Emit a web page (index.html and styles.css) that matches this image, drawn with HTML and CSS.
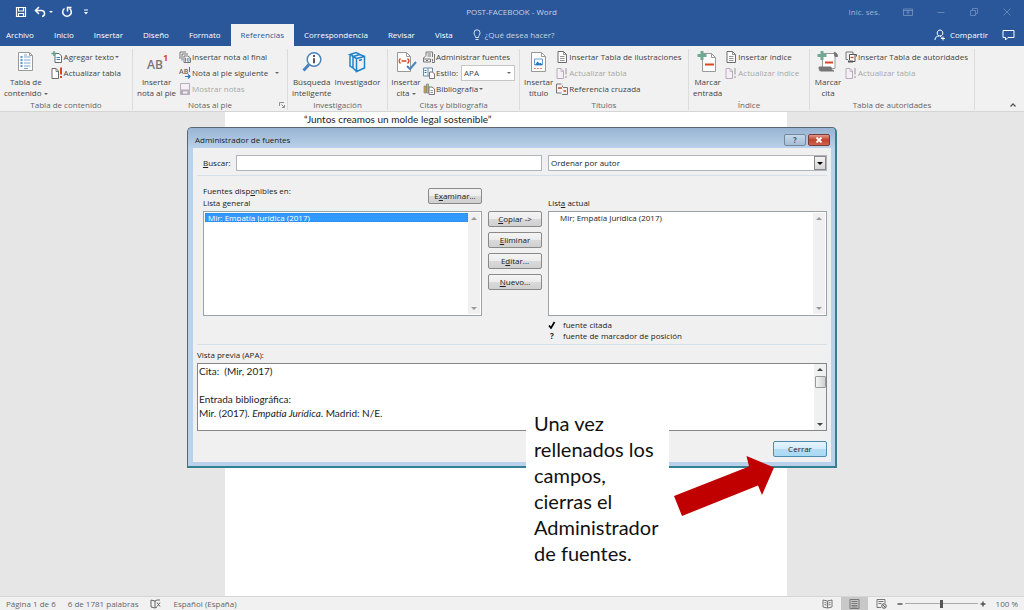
FILE: index.html
```html
<!DOCTYPE html>
<html lang="es">
<head>
  <meta charset="UTF-8" />
  <meta name="viewport" content="width=device-width, initial-scale=1.0"/>
  <title>POST-FACEBOOK - Word</title>
  <link rel="stylesheet" href="styles.css">
</head>
<body>
  <!-- Shared icons -->
  <svg class="sprite" aria-hidden="true">
    <symbol id="page" viewBox="0 0 12 12"><path d="M2 .5h5.500l3 3v8H2z" fill="#fff" stroke="#6b6b6b"/><path d="M7.500.5v3h3M4 5.500h4.500M4 7.500h4.500M4 9.500h4.500" fill="none" stroke="#777" stroke-width=".8"/></symbol>
    <symbol id="update" viewBox="0 0 12 12"><path d="M1 1.500h4l2.500 2.500v7.500H1z" fill="#fff" stroke="#6b6b6b"/><path d="M5 1.500v3h2.500" fill="none" stroke="#6b6b6b" stroke-width=".8"/><path d="M10 .5v7M10 9v2" stroke="#d9471f" stroke-width="2"/></symbol>
    <symbol id="update-off" viewBox="0 0 12 12"><path d="M1 1.500h4l2.500 2.500v7.500H1z" fill="#f6eff8" stroke="#b5adb8"/><path d="M5 1.500v3h2.500" fill="none" stroke="#b5adb8" stroke-width=".8"/><path d="M10 1v6.500M10 9v2" stroke="#b0b0b0" stroke-width="1.400"/></symbol>
  </svg>

  <header class="titlebar">
    <div class="quick">
      <button aria-label="Guardar"><svg width="12" height="12" viewBox="0 0 12 12"><path d="M1.500 1.500h9v9h-9zM3.500 1.500v3.500h5V1.500M3.500 10.500V7.500h5v3" fill="none" stroke="#fff" stroke-width="1.200"/></svg></button>
      <button aria-label="Deshacer"><svg width="20" height="12" viewBox="0 0 20 12"><path d="M5 1L1.500 4.500 5 8M2 4.500h5.500c4 0 4 5.500.5 6" fill="none" stroke="#fff" stroke-width="1.500"/><path d="M15 5h4l-2 2z" fill="#fff"/></svg></button>
      <button aria-label="Rehacer"><svg width="12" height="12" viewBox="0 0 12 12"><path d="M3.500 2.500a4.300 4.300 0 1 0 5 0M6.500 5.500V1.500h4" fill="none" stroke="#fff" stroke-width="1.500"/></svg></button>
      <button aria-label="Personalizar"><svg width="12" height="12" viewBox="0 0 12 12"><path d="M4 4h4" stroke="#fff"/><path d="M4 6h4l-2 2.500z" fill="#fff"/></svg></button>
    </div>
    <h1>POST-FACEBOOK - Word</h1>
    <div class="window-buttons">
      <button>Inic. ses.</button>
      <button aria-label="Opciones de la cinta"><svg width="10" height="10" viewBox="0 0 10 10"><path d="M.5 2h9v6.500h-9zM.5 3.500h9M5 7.500v-3M3.500 6L5 4.500 6.500 6" fill="none" stroke="#7895c2" stroke-width=".8"/></svg></button>
      <button aria-label="Minimizar"><svg width="10" height="10" viewBox="0 0 10 10"><path d="M1.500 5.500h7" stroke="#6485b8"/></svg></button>
      <button aria-label="Restaurar"><svg width="10" height="10" viewBox="0 0 10 10"><path d="M1.500 3.500h5v5h-5zM3.500 3.500v-2h5v5h-2" fill="none" stroke="#6485b8"/></svg></button>
      <button aria-label="Cerrar Word"><svg width="10" height="10" viewBox="0 0 10 10"><path d="M1.500 1.500l7 7M8.500 1.500l-7 7" stroke="#6485b8"/></svg></button>
    </div>
  </header>

  <nav class="tabs">
    <button>Archivo</button>
    <button>Inicio</button>
    <button>Insertar</button>
    <button>Diseño</button>
    <button>Formato</button>
    <button class="active">Referencias</button>
    <button>Correspondencia</button>
    <button>Revisar</button>
    <button>Vista</button>
    <button class="tell-me"><svg width="8" height="12" viewBox="0 0 8 12"><path d="M2.500 8.500C2.500 6.500 1 6 1 3.800a3 3 0 0 1 6 0C7 6 5.500 6.500 5.500 8.500zM2.500 10.500h3" fill="none" stroke="#dbe4f2"/></svg>¿Qué desea hacer?</button>
    <button class="share"><svg width="12" height="12" viewBox="0 0 12 12"><path d="M1 11c0-3 2-4 4-4M6 7C2 7 2.500 1 6 1s4 6 0 6zM6 7l1.500 1.500M9 7.500v4M7 9.500h4" fill="none" stroke="#fff"/></svg>Compartir</button>
    <button class="comments" aria-label="Comentarios"><svg width="13" height="12" viewBox="0 0 13 12"><path d="M1 1.500h11v7H6l-2.500 2.500V8.500H1z" fill="none" stroke="#fff"/></svg></button>
  </nav>

  <main class="ribbon">
    <section class="group toc">
      <div class="tools">
        <button class="large">
          <svg width="20" height="22" viewBox="0 0 20 22"><path d="M2.500 1.500h11l3 3v15h-14z" fill="#fff" stroke="#999"/><path d="M13.500 1.500v3h3" fill="none" stroke="#999"/><path d="M4.500 6h2M4.500 9h2M4.500 12h2M4.500 15h2" stroke="#2b74b8" stroke-width="1.500"/><path d="M8 4h3M8 6h6.500M8 9h6.500M8 12h6.500M8 15h6.500M8 17.500h4" stroke="#7aa5cf"/></svg>
          <span>Tabla de<br>contenido <i class="caret"></i></span>
        </button>
        <div class="column">
          <button><svg viewBox="0 0 12 12"><path d="M4 2.500h4l2.500 2.500v6.500H4z" fill="#fff" stroke="#6b6b6b"/><path d="M5.500 6.500H9M5.500 8.500H9" stroke="#3d7dbd"/><path d="M3 0v5M.5 2.500h5" stroke="#5ba083" stroke-width="1.400"/></svg>Agregar texto <i class="caret"></i></button>
          <button><svg><use href="#update"/></svg>Actualizar tabla</button>
        </div>
      </div>
      <h2>Tabla de contenido</h2>
    </section>

    <section class="group notes">
      <div class="tools">
        <button class="large">
          <svg width="22" height="22" viewBox="0 0 22 22"><text x="1" y="18" class="glyph-ab">AB</text><text x="17" y="10" class="glyph-one">1</text></svg>
          <span>Insertar<br>nota al pie</span>
        </button>
        <div class="column">
          <button><svg viewBox="0 0 12 12"><path d="M1 8V1h6M3 9.500V3h6" fill="none" stroke="#777"/><path d="M5 5h4l2.500 2v4.500H5z" fill="#fff" stroke="#777"/><path d="M7 7H6.500v3.500H7M9.500 7h.5v3.500h-.5M8.300 7v3.500" fill="none" stroke="#2b74b8" stroke-width=".8"/></svg>Insertar nota al final</button>
          <button><svg viewBox="0 0 12 12"><text x="0" y="7" class="glyph-ab-small">AB</text><path d="M10.500 0v5" stroke="#d9471f"/><path d="M6 9.500h5M9 7.500l2 2-2 2" fill="none" stroke="#2b74b8" stroke-width="1.200"/></svg>Nota al pie siguiente <i class="caret spaced"></i></button>
          <button disabled><svg viewBox="0 0 12 12"><path d="M1.500.5h9v11h-9z" fill="#f6eff8" stroke="#b5adb8"/><path d="M1.500 6.500h9v5h-9z" fill="#b5adb8"/><path d="M4 8.500h4.500v2H4z" fill="#f6eff8"/></svg>Mostrar notas</button>
        </div>
      </div>
      <h2>Notas al pie</h2>
      <button class="launcher" aria-label="Notas al pie y notas al final"><svg width="6" height="6" viewBox="0 0 6 6"><path d="M.5 4V.5H5M2.500 2.500L5 5M5.500 3v2.500H3" fill="none" stroke="#777" stroke-width=".8"/></svg></button>
    </section>

    <section class="group research">
      <div class="tools">
        <button class="large">
          <svg width="20" height="22" viewBox="0 0 20 22"><circle cx="12" cy="8.500" r="6.800" fill="#fff" stroke="#4b83bd" stroke-width="1.500"/><path d="M7 13.500L1.500 19.500" stroke="#4b83bd" stroke-width="3"/><path d="M12 4v2M12 7.200v5" stroke="#444" stroke-width="1.800"/></svg>
          <span>Búsqueda<br>inteligente</span>
        </button>
        <button class="large">
          <svg width="20" height="22" viewBox="0 0 20 22"><path d="M9.500 7.500l8-2V17l-8 3.500zM9.500 7.500L6 5.500l7-2 4.500 2M6 5.500V17l3.500 3.500M6 4.500L3 3.500 9 1.500l4 2M3 3.500V15l3 2M12 9.500l3-1" fill="none" stroke="#1f82c9" stroke-width="1.500"/></svg>
          <span>Investigador</span>
        </button>
      </div>
      <h2>Investigación</h2>
    </section>

    <section class="group citations">
      <div class="tools">
        <button class="large">
          <svg width="22" height="22" viewBox="0 0 22 22"><path d="M2.500 1.500h9l4 4v15h-13z" fill="#fff" stroke="#999"/><path d="M11.500 1.500v4h4" fill="none" stroke="#999"/><path d="M5.500 7.500c-2 2-2 3 0 5M12.500 7.500c2 2 2 3 0 5M6.500 10h5" fill="none" stroke="#d9471f" stroke-width="1.400"/><path d="M12 15l3 3 6-7" fill="none" stroke="#4b83bd" stroke-width="2"/></svg>
          <span>Insertar<br>cita <i class="caret"></i></span>
        </button>
        <div class="column">
          <button><svg viewBox="0 0 12 12"><path d="M.5 8.500V7L3 4.500V1h6.500v5M4.500 3H8M4.500 5H8M.5 8h7v3h-7zM3 9.500h2" fill="none" stroke="#777"/><path d="M9.500 8v2.500M11.500 3v8.500H9" fill="none" stroke="#777"/></svg>Administrar fuentes</button>
          <div class="style-row">
            <svg viewBox="0 0 12 12"><path d="M.5 1h9v8h-9zM5 1v8" fill="#fff" stroke="#6d8aa8"/><path d="M1.500 3.500h2M1.500 5.500h2" stroke="#2b74b8"/><path d="M6.500 5h3l2 2v4.500h-5z" fill="#fff" stroke="#777"/></svg>
            <label for="style">Estilo:</label>
            <span class="picker"><select id="style"><option>APA</option></select><i class="caret"></i></span>
          </div>
          <button><svg viewBox="0 0 12 12"><path d="M1 3h2v7H1zM3.500 1h2v9h-2z" fill="#d8a847" stroke="#777" stroke-width=".6"/><path d="M6 4h3l2.500 2v5.500H6z" fill="#fff" stroke="#777"/><path d="M7.500 7.500h2.500M7.500 9.500h2.500" stroke="#777" stroke-width=".8"/></svg>Bibliografía <i class="caret"></i></button>
        </div>
      </div>
      <h2>Citas y bibliografía</h2>
    </section>

    <section class="group captions">
      <div class="tools">
        <button class="large">
          <svg width="20" height="22" viewBox="0 0 20 22"><path d="M2.500 1.500h10l4 4v15h-14z" fill="#fff" stroke="#999"/><path d="M12.500 1.500v4h4" fill="none" stroke="#999"/><path d="M5.500 8h8v6h-8z" fill="#fff" stroke="#6b9cc9"/><path d="M6 14l2.500-3.500 2 2 1-1 2 2.500z" fill="#2b74b8"/><path d="M5 17.500h9" stroke="#e8896c" stroke-dasharray="2 1"/></svg>
          <span>Insertar<br>título</span>
        </button>
        <div class="column">
          <button><svg><use href="#page"/></svg>Insertar Tabla de ilustraciones</button>
          <button disabled><svg><use href="#update-off"/></svg>Actualizar tabla</button>
          <button><svg viewBox="0 0 12 12"><path d="M5.500 1H.5v9h5M6.500 4V2.500M7 4.500h4.500v7H6" fill="none" stroke="#777"/><path d="M2 5h4M7.500 8H10" stroke="#d9471f" stroke-width="1.400"/></svg>Referencia cruzada</button>
        </div>
      </div>
      <h2>Títulos</h2>
    </section>

    <section class="group index">
      <div class="tools">
        <button class="large">
          <svg width="22" height="22" viewBox="0 0 22 22"><path d="M5.500 2.500h9l4 4v14h-13z" fill="#fff" stroke="#999"/><path d="M14.500 2.500v4h4" fill="none" stroke="#999"/><path d="M8 13.500h9" stroke="#d9471f" stroke-width="2"/><path d="M5 0v9M.5 4.500h9" stroke="#6fa992" stroke-width="3"/></svg>
          <span>Marcar<br>entrada</span>
        </button>
        <div class="column">
          <button><svg><use href="#page"/></svg>Insertar índice</button>
          <button disabled><svg><use href="#update-off"/></svg>Actualizar índice</button>
        </div>
      </div>
      <h2>Índice</h2>
    </section>

    <section class="group authorities">
      <div class="tools">
        <button class="large">
          <svg width="22" height="22" viewBox="0 0 22 22"><path d="M5.500 2.500H18v15H5.500z" fill="#fff" stroke="#999"/><path d="M17 1.500c2 0 3.500 1 3.500 4H18zM2 16h12c0 2 1 3.500 3 4H4c-1.500 0-2-1.500-2-4z" fill="#777" stroke="#777"/><path d="M8 11.500h8" stroke="#d9471f" stroke-width="2"/><path d="M5 0v9M.5 4.500h9" stroke="#6fa992" stroke-width="3"/></svg>
          <span>Marcar<br>cita</span>
        </button>
        <div class="column">
          <button><svg viewBox="0 0 12 12"><path d="M1 8.500V1h7v2M1 8.500h2" fill="none" stroke="#777"/><path d="M4.500 9V3.500H10v7H5M10 3.500h1.500v2" fill="#fff" stroke="#555"/><path d="M3 10.500h5" stroke="#555" stroke-width="2"/><path d="M5.500 6.500h3" stroke="#d9471f" stroke-width="1.400"/></svg>Insertar Tabla de autoridades</button>
          <button disabled><svg><use href="#update-off"/></svg>Actualizar tabla</button>
        </div>
      </div>
      <h2>Tabla de autoridades</h2>
    </section>
    <button class="collapse" aria-label="Contraer la cinta"><svg width="8" height="6" viewBox="0 0 8 6"><path d="M1.500 4.500L4 2l2.500 2.500" fill="none" stroke="#555" stroke-width="1.300"/></svg></button>
  </main>

  <div class="workspace">
    <article class="paper"><p>“Juntos creamos un molde legal sostenible”</p></article>

    <!-- Source manager window -->
    <div class="dialog" role="dialog" aria-labelledby="dialog-title">
      <div class="dialog-title">
        <h2 id="dialog-title">Administrador de fuentes</h2>
        <button class="help" aria-label="Ayuda">?</button>
        <button class="close" aria-label="Cerrar ventana"><svg width="8" height="6" viewBox="0 0 8 6"><path d="M1.500.5l5 5M6.500.5l-5 5" stroke="#fff" stroke-width="1.800"/></svg></button>
      </div>
      <div class="dialog-body">
        <div class="search">
          <div class="field"><label for="search"><u>B</u>uscar:</label><input type="text" id="search"></div>
          <div class="sort">
            <select aria-label="Ordenar"><option>Ordenar por autor</option></select>
            <i class="drop"></i>
          </div>
        </div>
        <div class="sources">
          <div class="heading">
            <div id="available">Fuentes disp<u>o</u>nibles en:<br>Lista general</div>
            <button class="btn">E<u>x</u>aminar...</button>
          </div>
          <div class="heading current"><div id="current">List<u>a</u> actual</div></div>
          <div class="list">
            <ul role="listbox" aria-labelledby="available"><li class="selected" role="option" aria-selected="true">Mir; Empatía Jurídica (2017)</li></ul>
            <div class="scroll off"><i class="up"></i><i class="down"></i></div>
          </div>
          <div class="actions">
            <button class="btn"><u>C</u>opiar -&gt;</button>
            <button class="btn"><u>E</u>liminar</button>
            <button class="btn">E<u>d</u>itar...</button>
            <button class="btn"><u>N</u>uevo...</button>
          </div>
          <div class="list">
            <ul class="indent" role="listbox" aria-labelledby="current"><li role="option">Mir; Empatía Jurídica (2017)</li></ul>
            <div class="scroll off"><i class="up"></i><i class="down"></i></div>
          </div>
          <div class="legend">
            <b><svg width="8" height="8" viewBox="0 0 8 8"><path d="M1 4.500L3 7l3.500-6" fill="none" stroke="#000" stroke-width="1.700"/></svg></b><span>fuente citada</span>
            <b>?</b><span>fuente de marcador de posición</span>
          </div>
        </div>
        <div class="preview">
          <h3>Vista previa (APA):</h3>
          <div class="preview-box">
            <div class="preview-text">
              <p>Cita:&nbsp; (Mir, 2017)</p>
              <p>&nbsp;</p>
              <p>Entrada bibliográfica:</p>
              <p>Mir. (2017). <em>Empatía Jurídica</em>. Madrid: N/E.</p>
            </div>
            <div class="scroll"><i class="up"></i><span class="thumb"></span><i class="down"></i></div>
          </div>
        </div>
        <div class="dialog-footer"><button class="btn primary">Cerrar</button></div>
      </div>
    </div>

    <!-- Tutorial note and pointer -->
    <p class="callout">Una vez rellenados los campos, cierras el Administrador de fuentes.</p>
    <svg class="arrow" width="100" height="60" viewBox="0 0 100 60"><path d="M0 40l75-29.500L72.500 0 100 11.500 88 39l-4-9.500L8 60z" fill="#c00000"/></svg>
  </div>

  <footer class="status">
    <span>Página 1 de 6</span>
    <span>6 de 1781 palabras</span>
    <button aria-label="Revisión"><svg width="11" height="10" viewBox="0 0 11 10"><path d="M5 2L1 1v7l4 1zM5 2l2-1h3M5 9l2-1M7 3.500l3 4M10 3.500l-3 4" fill="none" stroke="#666"/></svg></button>
    <span>Español (España)</span>
    <div class="views">
      <button aria-label="Modo de lectura"><svg width="11" height="10" viewBox="0 0 11 10"><path d="M5.500 2L1 1v7l4.500 1L10 8V1zM5.500 2v7M2.500 3.500l2 .5M2.500 5.500l2 .5M6.500 4l2-.5M6.500 6l2-.5" fill="none" stroke="#777"/></svg></button>
      <button class="on" aria-label="Diseño de impresión"><svg width="11" height="10" viewBox="0 0 11 10"><path d="M1 .5h9v9H1zM2.500 2.500h6M2.500 4.500h6M2.500 6.500h6M2.500 8h6" fill="none" stroke="#777"/></svg></button>
      <button aria-label="Diseño web"><svg width="11" height="10" viewBox="0 0 11 10"><path d="M5 8.500H1v-8h8V4M2.500 2.500h5M2.500 4.500h3" fill="none" stroke="#777"/><circle cx="8" cy="7" r="2.300" fill="#ddd" stroke="#666"/><path d="M6.500 5.500l3 3" stroke="#666"/></svg></button>
    </div>
    <div class="zoom">
      <button aria-label="Alejar"><svg width="6" height="6" viewBox="0 0 6 6"><path d="M.5 3h5" stroke="#555" stroke-width="1.500"/></svg></button>
      <input type="range" aria-label="Zoom" min="0" max="200" value="100">
      <button aria-label="Acercar"><svg width="6" height="6" viewBox="0 0 6 6"><path d="M.5 3h5M3 .5v5" stroke="#555" stroke-width="1.500"/></svg></button>
      <span>100 %</span>
    </div>
  </footer>
</body>
</html>
```
FILE: styles.css
```css
:root {
  --blue: #2a579a;
  --ribbon: #f1f1f1;
  --text: #444;
  --line: #d5d5d5;
}

* {
  box-sizing: border-box;
}

body {
  margin: 0;
  height: 100vh;
  display: flex;
  flex-direction: column;
  overflow: hidden;
  font-family: "Open Sans", "Noto Sans", sans-serif;
  font-size: 8px;
  line-height: 12px;
  color: var(--text);
  background: #e6e6e6;
}

h1, h2, h3, p, ul {
  margin: 0;
  padding: 0;
  font-size: inherit;
  font-weight: normal;
  list-style: none;
}

button, input, select {
  margin: 0;
  padding: 0;
  border: 0;
  border-radius: 0;
  background: none;
  color: inherit;
  font: inherit;
  appearance: none;
}

button {
  display: flex;
  align-items: center;
  white-space: nowrap;
}

svg {
  display: block;
  flex: none;
}

.sprite {
  position: absolute;
  width: 0;
  height: 0;
}

.caret {
  display: inline-block;
  border: 2px solid transparent;
  border-top-color: #666;
  border-bottom: 0;
  vertical-align: middle;
}

.caret.spaced {
  margin-left: 6px;
}

/* Title bar */
.titlebar {
  display: grid;
  grid-template-columns: 1fr auto 1fr;
  align-items: center;
  height: 24px;
  padding: 0 12px 0 15px;
  background: var(--blue);
  color: #c5d2e6;
}

.titlebar h1 {
  margin-right: 4px;
}

.quick {
  display: flex;
  gap: 7px;
}

.window-buttons {
  display: flex;
  justify-content: flex-end;
  gap: 23px;
  color: #9fb4d4;
}

/* Tabs */
.tabs {
  display: flex;
  height: 22px;
  padding-right: 9px;
  background: var(--blue);
  color: #fff;
}

.tabs button {
  padding: 0 10px;
}

.tabs button:first-child {
  padding-left: 6px;
}

.tabs .active {
  background: var(--ribbon);
  color: var(--blue);
}

.tabs .tell-me {
  gap: 4px;
  color: #c5d2e6;
}

.tabs .share {
  gap: 4px;
  margin-left: auto;
  padding-right: 14px;
}

.tabs .comments {
  padding: 0;
}

/* Ribbon */
.ribbon {
  display: flex;
  height: 66px;
  padding-top: 3px;
  background: var(--ribbon);
  border-bottom: 1px solid var(--line);
}

.group {
  position: relative;
  display: flex;
  flex-direction: column;
  justify-content: space-between;
  flex: none;
  margin-bottom: 1px;
  padding: 0 4px;
  border-right: 1px solid #dcdcdc;
}

.toc { width: 133px; }
.notes { width: 155px; }
.research { width: 100px; }
.citations { width: 132px; }
.captions { width: 169px; }
.index { width: 121px; }
.authorities { width: 165px; }

.group h2 {
  text-align: center;
  line-height: 10px;
  color: #666;
}

.tools {
  display: flex;
  gap: 3px;
}

.large {
  flex-direction: column;
  gap: 3px;
  padding-top: 2px;
  line-height: 11px;
  text-align: center;
  min-width: 28px;
}

.column button {
  gap: 1px;
  height: 16px;
}

.column svg {
  width: 12px;
  height: 12px;
}

.column button:disabled {
  color: #a8a8a8;
}

.style-row {
  display: flex;
  align-items: center;
  gap: 1px;
  height: 16px;
}

.picker {
  display: flex;
  align-items: center;
  width: 54px;
  height: 16px;
  margin-left: 2px;
  padding: 0 3px 0 2px;
  background: #fff;
  border: 1px solid #c6c6c6;
}

.picker select {
  flex: 1;
  min-width: 0;
}

.launcher {
  position: absolute;
  right: 2px;
  bottom: 2px;
}

.collapse {
  margin-left: auto;
  padding-right: 7px;
  align-self: flex-end;
  height: 12px;
}

.glyph-ab {
  font-size: 12px;
  font-weight: 600;
  fill: #777;
}

.glyph-one {
  font-size: 9px;
  font-weight: bold;
  fill: #d9471f;
}

.glyph-ab-small {
  font-size: 7px;
  font-weight: 600;
  fill: #666;
}

/* Document */
.workspace {
  position: relative;
  flex: 1;
  min-height: 0;
  display: flex;
  justify-content: center;
  padding-right: 12px;
}

.paper {
  width: 562px;
  padding: 0 79px;
  background: #fff;
  font-family: Lato, sans-serif;
  font-size: 10px;
  line-height: 14px;
  color: #222;
}

/* Dialog */
.dialog {
  position: absolute;
  top: 15px;
  left: 50%;
  width: 650px;
  transform: translateX(-50%);
  padding: 0 4px 4px 5px;
  background: #b9d1ea;
  border: 1px solid #5c6670;
  border-right: 2px solid #357f92;
  border-bottom: 2px solid #357f92;
  border-radius: 5px 5px 0 0;
  color: #222;
}

.dialog-title {
  display: flex;
  align-items: flex-start;
  gap: 2px;
  height: 20px;
  margin: 0 -4px 0 -5px;
  padding: 6px 5px 0 7px;
  background: linear-gradient(#98b4d2, #b9d1ea);
  border-radius: 4px 4px 0 0;
}

.dialog-title h2 {
  flex: 1;
}

.dialog-title button {
  justify-content: center;
  width: 22px;
  height: 12px;
  border: 1px solid #75889c;
  border-radius: 2px;
  background: linear-gradient(#c6d8ea, #a4bdd6);
  font-weight: bold;
  color: #556;
}

.dialog-title .close {
  border-color: #7c3a36;
  background: linear-gradient(#e09a8d, #c0422f 50%, #cf6650);
}

.dialog-body {
  padding: 7px 4px 4px;
  background: #f0f0f0;
}

.search {
  display: grid;
  grid-template-columns: 1fr 279px;
  gap: 6px;
  padding: 0 0 4px 6px;
  border-bottom: 1px solid #d5e0e8;
}

.field {
  display: flex;
  align-items: center;
  gap: 5px;
}

.field input {
  flex: 1;
  height: 16px;
  padding: 0 3px;
  background: #fff;
  border: 1px solid #b0b4b9;
}

.sort {
  display: flex;
  height: 16px;
  background: #fff;
  border: 1px solid #b0b4b9;
}

.sort select {
  flex: 1;
  padding-left: 2px;
}

.drop {
  display: flex;
  align-items: center;
  justify-content: center;
  width: 12px;
  border: 1px solid #8a8a8a;
  background: linear-gradient(#f4f4f4, #d4d4d4);
}

.drop::before {
  content: '';
  border: 3px solid transparent;
  border-top-color: #000;
  border-bottom: 0;
}

.sources {
  display: grid;
  grid-template-columns: 1fr 54px 1fr;
  column-gap: 6px;
  padding: 9px 0 3px 6px;
  border-bottom: 1px solid #d5e0e8;
}

.heading {
  display: flex;
  justify-content: space-between;
  align-items: flex-start;
  height: 26px;
}

.heading .btn {
  width: 54px;
  margin-top: 3px;
}

.heading.current {
  grid-column: 3;
  align-items: flex-end;
  padding-bottom: 2px;
}

.btn {
  justify-content: center;
  width: 100%;
  height: 16px;
  border: 1px solid #8a8a8a;
  border-radius: 2px;
  background: linear-gradient(#f4f4f4, #ececec 50%, #dadada 50%, #d0d0d0);
}

.btn.primary {
  width: 54px;
  border-color: #4f8bb0;
  background: linear-gradient(#e6f4fc, #d2ecfa 50%, #b4def6 50%, #a8d9f3);
}

.list {
  display: flex;
  height: 105px;
  padding: 1px;
  background: #fff;
  border: 1px solid #9da1a8;
}

.list ul {
  flex: 1;
}

.list li {
  padding: 0 3px;
  line-height: 9px;
}

.list .selected {
  background: #3399ff;
  color: #fff;
  outline: 1px dotted #b5672a;
  outline-offset: -1px;
}

.list .indent li {
  padding-left: 10px;
}

.actions {
  display: flex;
  flex-direction: column;
  gap: 5px;
}

.scroll {
  display: flex;
  flex-direction: column;
  align-items: center;
  width: 12px;
  padding: 4px 0;
  background: #f0f0f0;
}

.up, .down {
  border: 3px solid transparent;
}

.up {
  border-top: 0;
  border-bottom-color: #444;
}

.down {
  margin-top: auto;
  border-bottom: 0;
  border-top-color: #444;
}

.off .up {
  border-bottom-color: #999;
}

.off .down {
  border-top-color: #999;
}

.thumb {
  width: 11px;
  height: 12px;
  margin-top: 5px;
  border: 1px solid #999;
  border-radius: 1px;
  background: linear-gradient(90deg, #f5f5f5, #d0d0d0);
}

.legend {
  grid-column: 3;
  display: grid;
  grid-template-columns: 8px 1fr;
  align-items: center;
  column-gap: 7px;
  padding-top: 3px;
  line-height: 11px;
}

.legend b {
  text-align: center;
}

.preview h3 {
  padding-top: 4px;
}

.preview-box {
  display: flex;
  height: 68px;
  margin-top: 2px;
  background: #fff;
  border: 1px solid #868686;
}

.preview-text {
  flex: 1;
  padding-left: 1px;
  font-family: Lato, sans-serif;
  font-size: 10px;
  line-height: 14px;
}

.dialog-footer {
  display: flex;
  justify-content: flex-end;
  padding: 10px 0 1px;
}

/* Note */
.callout {
  position: absolute;
  top: 298px;
  left: 50%;
  width: 143px;
  margin-left: 14px;
  padding: 0 8px 12px;
  background: #fff;
  font-family: Lato, sans-serif;
  font-size: 20px;
  line-height: 26px;
  color: #111;
}

.arrow {
  position: absolute;
  top: 344px;
  left: 50%;
  margin-left: 162px;
}

/* Status bar */
.status {
  display: flex;
  align-items: center;
  gap: 12px;
  height: 14px;
  padding: 0 6px;
  background: var(--ribbon);
  border-top: 1px solid var(--line);
  color: #666;
}

.views {
  display: flex;
  margin-left: auto;
}

.views button {
  justify-content: center;
  width: 27px;
  height: 13px;
}

.views .on {
  background: #c8c8c8;
}

.zoom {
  display: flex;
  align-items: center;
  gap: 2px;
  margin-left: -10px;
}

.zoom input {
  width: 73px;
  height: 10px;
  background: linear-gradient(#aaa, #aaa) center / 100% 1px no-repeat;
}

.zoom input::-webkit-slider-thumb {
  appearance: none;
  width: 3px;
  height: 8px;
  background: #555;
}

.zoom span {
  margin-left: 8px;
}
```
